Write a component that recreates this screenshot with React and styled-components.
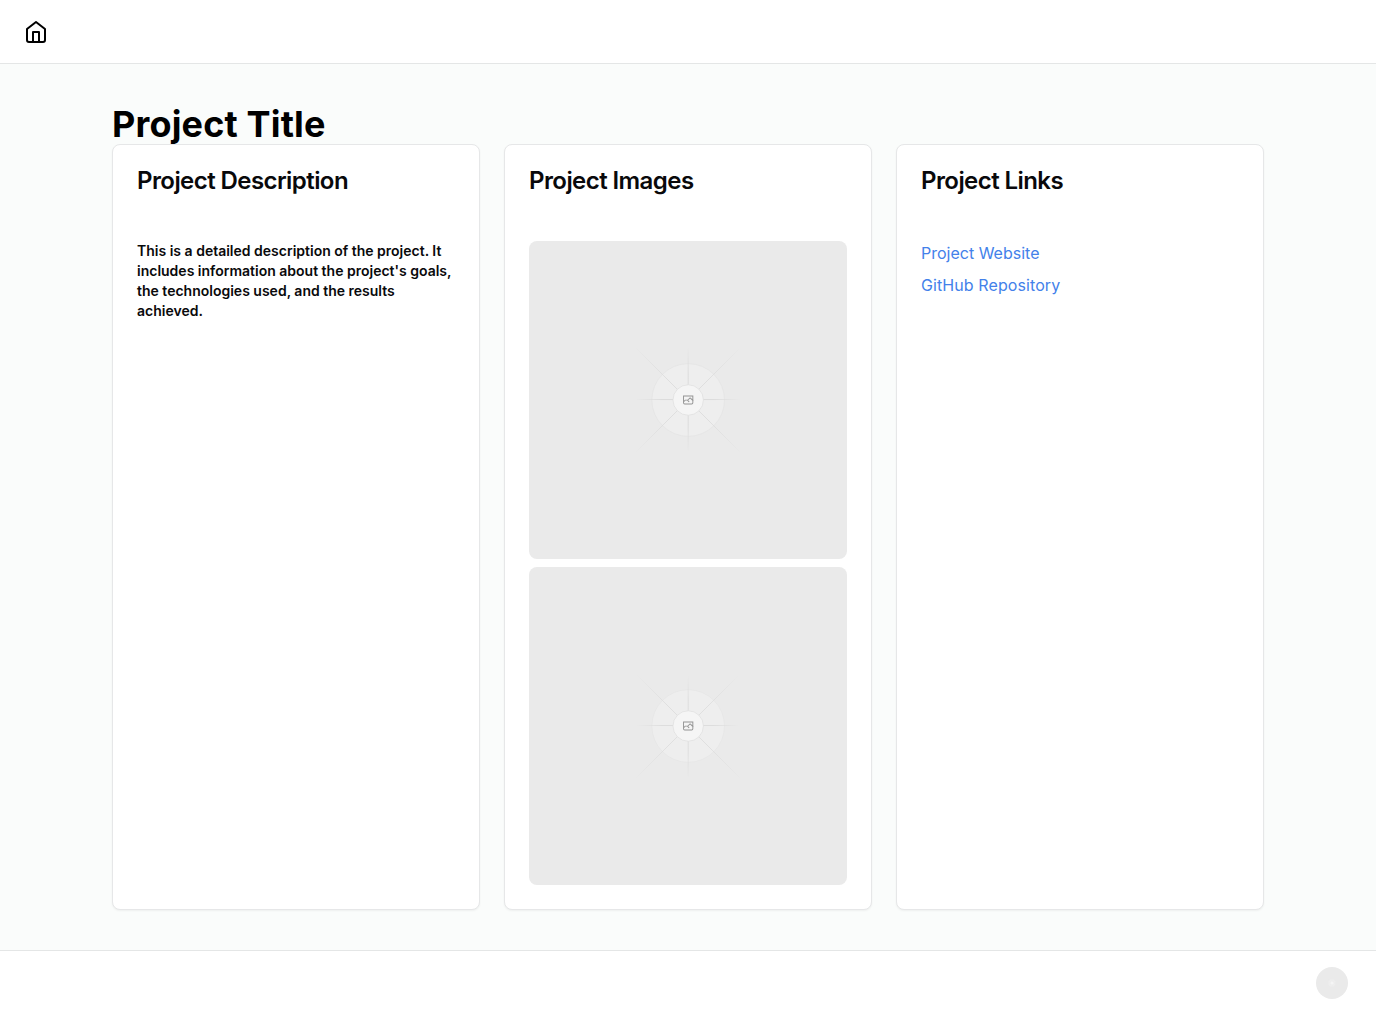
import React from "react";
import styled, { createGlobalStyle } from "styled-components";

const GlobalStyle = createGlobalStyle`
  *, *::before, *::after { box-sizing: border-box; }
  body {
    margin: 0;
    background: #ffffff;
    color: #09090b;
    font-family: Inter, "Liberation Sans", sans-serif;
    font-size: 16px;
    line-height: 24px;
  }
  h1, h3, p { margin: 0; }
`;

const Page = styled.div`
  display: flex;
  flex-direction: column;
  min-height: 100vh;
`;

const Header = styled.header`
  display: flex;
  align-items: center;
  height: 64px;
  padding: 0 24px;
  border-bottom: 1px solid #e4e6e6;
`;

const HomeLink = styled.a`
  display: flex;
  color: #000000;
`;

const Main = styled.main`
  flex: 1;
  padding: 40px 112px;
  background: #fafcfb;
`;

const PageTitle = styled.h1`
  font-size: 36px;
  line-height: 40px;
  font-weight: 700;
  letter-spacing: 0.16px;
  color: #000000;
`;

const CardGrid = styled.div`
  display: grid;
  grid-template-columns: repeat(3, minmax(0, 1fr));
  gap: 24px;
`;

const Card = styled.section`
  border: 1px solid #e6e7e8;
  border-radius: 8px;
  background: #ffffff;
  box-shadow: 0 1px 2px rgba(0, 0, 0, 0.05);
`;

const CardHeader = styled.div`
  padding: 24px;
`;

const CardTitle = styled.h3`
  font-size: 24px;
  line-height: 24px;
  font-weight: 600;
  letter-spacing: -0.57px;
`;

const CardBody = styled.div`
  display: flex;
  flex-direction: column;
  gap: 8px;
  padding: 24px;
`;

const Description = styled.p`
  font-size: 14px;
  line-height: 20px;
  font-weight: 600;
`;

const ProjectLink = styled.a`
  align-self: flex-start;
  color: #4381ea;
  letter-spacing: ${(p) => p.$tracking || "normal"};
  text-decoration: none;
`;

const PlaceholderArt = styled.svg`
  display: block;
  width: ${(p) => p.$size || "100%"};
  aspect-ratio: 1;
  border-radius: ${(p) => p.$radius};
`;

const Footer = styled.footer`
  display: flex;
  align-items: center;
  justify-content: flex-end;
  height: 64px;
  padding: 0 24px;
  border-top: 1px solid #e4e6e6;
`;

const AvatarButton = styled.button`
  display: flex;
  align-items: center;
  justify-content: center;
  width: 40px;
  height: 40px;
  padding: 0;
  border: 0;
  background: transparent;
`;

function HomeIcon() {
  return (
    <svg width="24" height="24" viewBox="0 0 24 24" fill="none" stroke="currentColor" strokeWidth="2" strokeLinecap="round" strokeLinejoin="round">
      <path d="m3 9 9-7 9 7v11a2 2 0 0 1-2 2H5a2 2 0 0 1-2-2z" />
      <polyline points="9 22 9 12 15 12 15 22" />
    </svg>
  );
}

function Placeholder({ id, size, radius, reach = 270, compact = false }) {
  const fade = `url(#${id})`;
  return (
    <PlaceholderArt viewBox="0 0 1200 1200" $size={size} $radius={radius}>
      <defs>
        <radialGradient id={id} gradientUnits="userSpaceOnUse" cx="600" cy="600" r={reach}>
          <stop offset="0.4" stopColor="#c9c9c9" />
          <stop offset="1" stopColor="#c9c9c9" stopOpacity="0" />
        </radialGradient>
        <radialGradient id={`${id}-axis`} gradientUnits="userSpaceOnUse" cx="600" cy="600" r="196">
          <stop offset="0.5" stopColor="#c9c9c9" />
          <stop offset="1" stopColor="#c9c9c9" stopOpacity="0" />
        </radialGradient>
      </defs>
      <rect width="1200" height="1200" fill="#eaeaea" />
      <g opacity="0.5">
        <circle cx="600.7" cy="600" r="137" fill="#f2f2f2" stroke="#dedede" strokeWidth="2.4" />
        <g stroke={fade} strokeWidth="2.8">
          <path d="M404 404 796 796M796 404 404 796" />
        </g>
        <g stroke={`url(#${id}-axis)`} strokeWidth="3.2">
          <path d="M600.7 404V796" />
          <path d="M404 598.2H796" />
        </g>
      </g>
      <circle cx="600.7" cy="600" r="57.5" fill="#f5f5f5" stroke={compact ? "none" : "#dfdfdf"} strokeWidth="2.8" />
      {!compact && (
        <path
          fill="#949494"
          fillRule="evenodd"
          d="M616.426 586.58h-31.434v16.176l3.553-3.554.531-.531h9.068l.074-.074 8.463-8.463h2.565l7.18 7.181V586.58Zm-15.715 14.654 3.698 3.699 1.283 1.282-2.565 2.565-1.282-1.283-5.2-5.199h-6.066l-5.514 5.514-.073.073v2.876a2.418 2.418 0 0 0 2.418 2.418h26.598a2.418 2.418 0 0 0 2.418-2.418v-8.317l-8.463-8.463-7.181 7.181-.071.072Zm-19.347 5.442v4.085a6.045 6.045 0 0 0 6.046 6.045h26.598a6.044 6.044 0 0 0 6.045-6.045v-7.108l1.356-1.355-1.282-1.283-.074-.073v-17.989h-38.689v23.43l-.146.146.146.147Z"
        />
      )}
    </PlaceholderArt>
  );
}

export default function App() {
  return (
    <Page>
      <GlobalStyle />
      <Header>
        <HomeLink href="#" aria-label="Home">
          <HomeIcon />
        </HomeLink>
      </Header>
      <Main>
        <PageTitle>Project Title</PageTitle>
        <CardGrid>
          <Card>
            <CardHeader>
              <CardTitle>Project Description</CardTitle>
            </CardHeader>
            <CardBody>
              <Description>
                This is a detailed description of the project. It includes information about the
                project's goals, the technologies used, and the results achieved.
              </Description>
            </CardBody>
          </Card>
          <Card>
            <CardHeader>
              <CardTitle>Project Images</CardTitle>
            </CardHeader>
            <CardBody>
              <Placeholder id="fade-first" radius="8px" reach={280} />
              <Placeholder id="fade-second" radius="8px" reach={280} />
            </CardBody>
          </Card>
          <Card>
            <CardHeader>
              <CardTitle>Project Links</CardTitle>
            </CardHeader>
            <CardBody>
              <ProjectLink href="#">Project Website</ProjectLink>
              <ProjectLink href="#" $tracking="0.09px">GitHub Repository</ProjectLink>
            </CardBody>
          </Card>
        </CardGrid>
      </Main>
      <Footer>
        <AvatarButton aria-label="Account">
          <Placeholder id="fade-avatar" size="32px" radius="50%" compact />
        </AvatarButton>
      </Footer>
    </Page>
  );
}
